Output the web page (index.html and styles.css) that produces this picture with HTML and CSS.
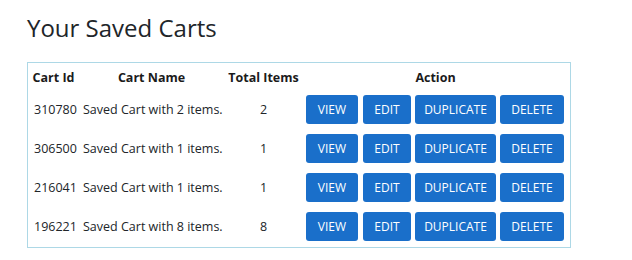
FILE: index.html
```html
<!DOCTYPE html>
<html lang="en">
<head>
    <meta charset="UTF-8">
    <meta name="viewport" content="width=device-width, initial-scale=1.0">
    <link rel="stylesheet" href="styles.css">
    <title>Saved Carts</title>
</head>
<body>
    <div class="page">
        <h1 class="title">Your Saved Carts</h1>
        <div class="carts">
            <table class="cart-table">
                <thead>
                    <tr>
                        <th class="col-id">Cart Id</th>
                        <th class="col-name">Cart Name</th>
                        <th class="col-items">Total Items</th>
                        <th class="col-action">Action</th>
                    </tr>
                </thead>
                <tbody>
                    <tr>
                        <td>310780</td>
                        <td>Saved Cart with 2 items.</td>
                        <td class="num">2</td>
                        <td>
                            <div class="actions">
                                <button class="btn btn-view">View</button>
                                <button class="btn btn-edit">Edit</button>
                                <button class="btn btn-dup">Duplicate</button>
                                <button class="btn btn-del">Delete</button>
                            </div>
                        </td>
                    </tr>
                    <tr>
                        <td>306500</td>
                        <td>Saved Cart with 1 items.</td>
                        <td class="num">1</td>
                        <td>
                            <div class="actions">
                                <button class="btn btn-view">View</button>
                                <button class="btn btn-edit">Edit</button>
                                <button class="btn btn-dup">Duplicate</button>
                                <button class="btn btn-del">Delete</button>
                            </div>
                        </td>
                    </tr>
                    <tr>
                        <td>216041</td>
                        <td>Saved Cart with 1 items.</td>
                        <td class="num">1</td>
                        <td>
                            <div class="actions">
                                <button class="btn btn-view">View</button>
                                <button class="btn btn-edit">Edit</button>
                                <button class="btn btn-dup">Duplicate</button>
                                <button class="btn btn-del">Delete</button>
                            </div>
                        </td>
                    </tr>
                    <tr>
                        <td>196221</td>
                        <td>Saved Cart with 8 items.</td>
                        <td class="num">8</td>
                        <td>
                            <div class="actions">
                                <button class="btn btn-view">View</button>
                                <button class="btn btn-edit">Edit</button>
                                <button class="btn btn-dup">Duplicate</button>
                                <button class="btn btn-del">Delete</button>
                            </div>
                        </td>
                    </tr>
                </tbody>
            </table>
        </div>
    </div>
</body>
</html>
```

FILE: styles.css
```css
body {
    margin: 0;
    background-color: #ffffff;
    color: #212529;
    font-family: "Open Sans", "Noto Sans", sans-serif;
}


.page {
    padding: 0 27px;
}


.title {
    margin: 0;
    padding-top: 12px;
    height: 50px;
    font-size: 24px;
    font-weight: 400;
    line-height: 32px;
}


.carts {
    display: inline-block;
    width: 542px;
    border: 1px solid #add8e6;
}


.cart-table {
    width: 542px;
    table-layout: fixed;
    border-spacing: 2px;
    font-size: 12.5px;
}


.cart-table th {
    height: 24px;
    padding: 0;
    font-weight: 700;
    color: #1b1b1b;
    white-space: nowrap;
}


.cart-table td {
    height: 37px;
    padding: 0 0 0 4px;
    white-space: nowrap;
}


.col-id {
    width: 47px;
}


.col-name {
    width: 145px;
}


.col-items {
    width: 75px;
}


.col-action {
    width: 265px;
}


.cart-table td.num {
    padding: 0;
    text-align: center;
}


.actions {
    display: flex;
    gap: 4px;
    margin-left: -1px;
}


.btn {
    height: 29px;
    padding: 0;
    border: none;
    border-radius: 3px;
    background-color: #1a6fca;
    color: #ffffff;
    font-family: inherit;
    font-size: 12px;
    text-transform: uppercase;
    cursor: pointer;
}


.btn-view {
    width: 52px;
    margin-right: 1px;
}


.btn-edit {
    width: 48px;
}


.btn-dup {
    width: 81px;
}


.btn-del {
    width: 64px;
}
```
